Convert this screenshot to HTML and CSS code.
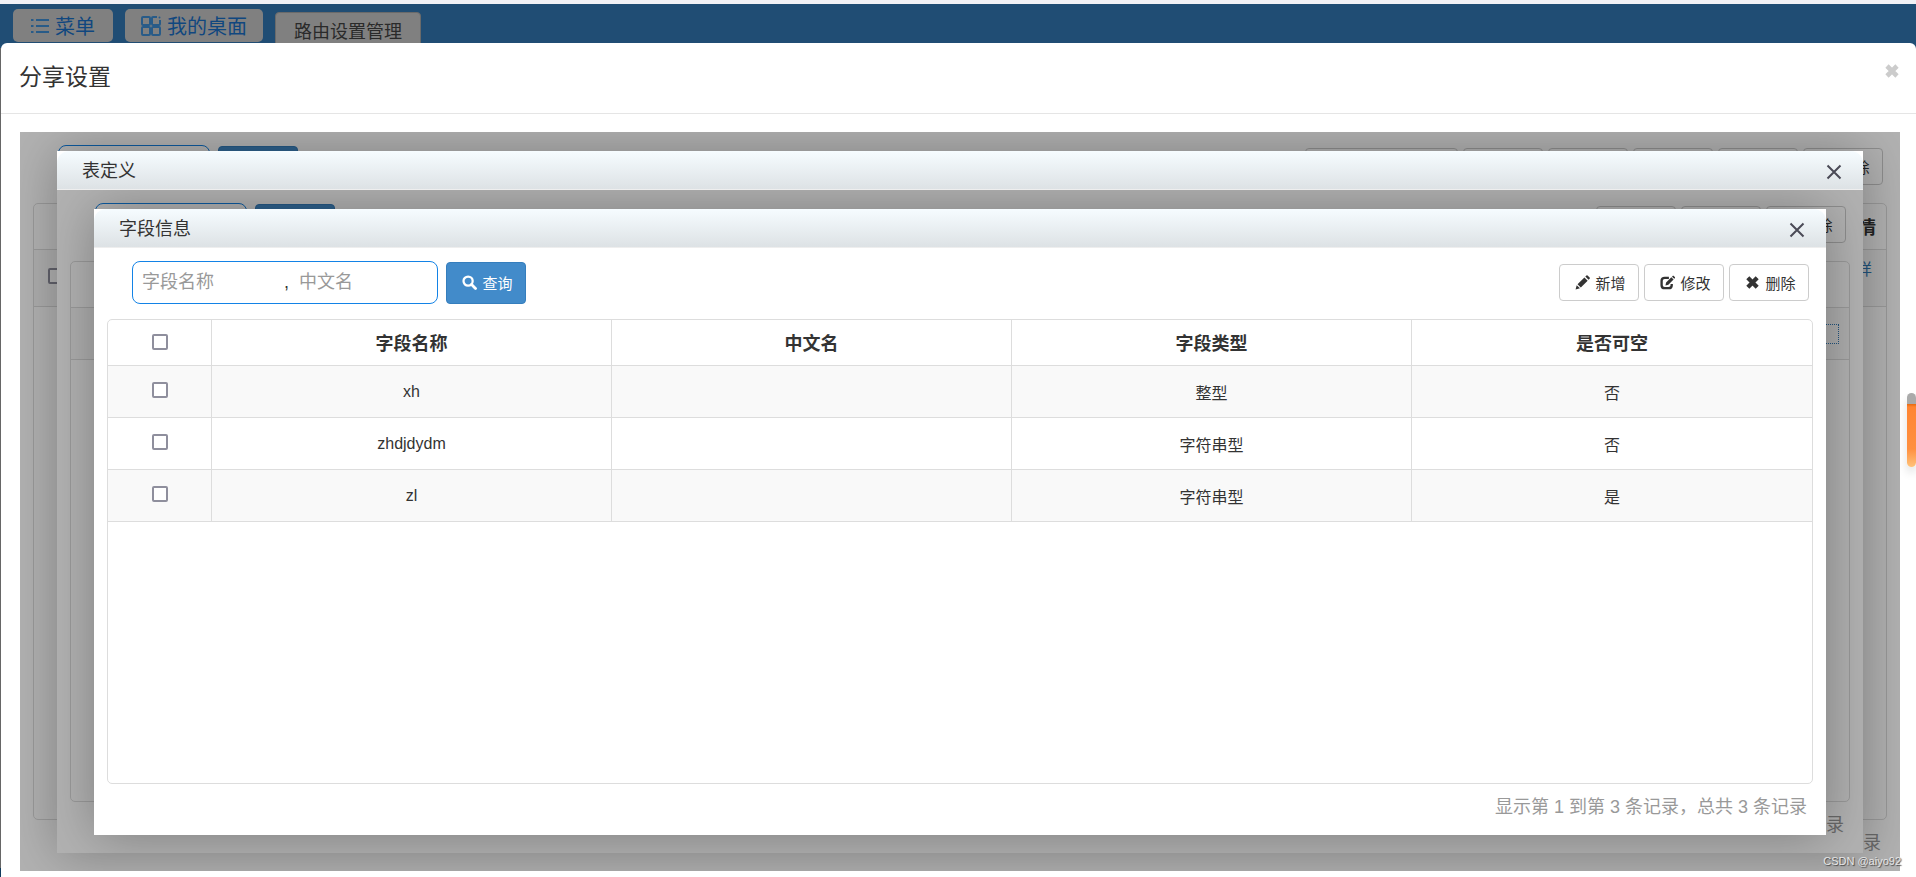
FILE: index.html
```html
<!DOCTYPE html>
<html lang="zh-CN">
<head>
<meta charset="utf-8">
<title>分享设置</title>
<link rel="stylesheet" href="styles.css">
</head>
<body>
<svg class="sprite" aria-hidden="true">
  <symbol id="i-search" viewBox="0 0 16 16"><circle cx="6.5" cy="6.5" r="4.9" fill="none" stroke="currentColor" stroke-width="2.4"/><path d="M10.2 10.2l4.2 4.2" stroke="currentColor" stroke-width="3" stroke-linecap="round"/></symbol>
  <symbol id="i-pencil" viewBox="0 0 16 16"><path fill="currentColor" d="M.6 15.4l1.2-4.6 3.5 3.4zM2.7 9.900l7.300-7.300 3.500 3.500-7.300 7.300zM11 1.700L12.200.500q.6-.6 1.200 0l2.200 2.200q.6.6 0 1.200L14.400 5.100z"/></symbol>
  <symbol id="i-edit" viewBox="0 0 16 16"><path fill="none" stroke="currentColor" stroke-width="2.500" d="M9.500 3H5Q1.700 3 1.700 6.200v4.600Q1.700 14 5 14h4.200q3.300 0 3.300-3.200V9.500"/><path fill="currentColor" d="M5.800 11.200l.7-3.100 5.600-5.600 2.400 2.400-5.600 5.600zM12.800 1.800l.9-.9q.4-.4.8 0l1.500 1.500q.4.4 0 .8l-.8.9z"/></symbol>
  <symbol id="i-remove" viewBox="0 0 16 16"><path fill="none" stroke="currentColor" stroke-width="4.600" d="M3 3l10 10M13 3L3 13"/></symbol>
  <symbol id="i-close" viewBox="0 0 16 16"><path fill="none" stroke="currentColor" stroke-width="2" d="M1.500 1.500l13 13M14.500 1.500l-13 13"/></symbol>
  <symbol id="i-list" viewBox="0 0 18 16"><path fill="none" stroke="currentColor" stroke-width="2" d="M0 2h2.500M5 2h13M0 8h2.500M5 8h13M0 14h2.500M5 14h13"/></symbol>
  <symbol id="i-grid" viewBox="0 0 20 20"><g fill="none" stroke="currentColor" stroke-width="2"><rect x="1" y="1" width="8" height="8" rx="1"/><rect x="1" y="11" width="8" height="8" rx="1"/><rect x="11" y="11" width="8" height="8" rx="1"/><path d="M16 1h-4q-1 0-1 1v6q0 1 1 1h6q1 0 1-1V4"/></g><circle cx="18.500" cy="1.500" r="1" fill="currentColor"/></symbol>
</svg>

<nav class="tabs">
  <a class="tab" href="#menu"><svg class="icon-list"><use href="#i-list"/></svg>菜单</a>
  <a class="tab tab-desk" href="#desk"><svg class="icon-grid"><use href="#i-grid"/></svg>我的桌面</a>
  <a class="tab tab-current" href="#route">路由设置管理</a>
</nav>

<main class="modal">
  <header class="modal-head">
    <h1>分享设置</h1>
    <button class="modal-close" aria-label="关闭"><svg><use href="#i-remove"/></svg></button>
  </header>

  <section class="view view-root">
    <div class="toolbar">
      <div class="search search-short"></div>
      <button class="btn btn-primary" aria-label="查询"></button>
      <div class="actions">
        <button class="btn btn-wide" aria-label="设置"></button>
        <button class="btn" aria-label="同步"></button>
        <button class="btn" aria-label="查看"></button>
        <button class="btn" aria-label="新增"></button>
        <button class="btn" aria-label="修改"></button>
        <button class="btn"><svg><use href="#i-remove"/></svg>删除</button>
      </div>
    </div>
    <div class="panel">
      <table class="grid grid-back">
        <thead><tr><th class="pick"></th><th class="more">详情</th></tr></thead>
        <tbody><tr class="row-tall"><td class="pick"><input type="checkbox" aria-label="选择"></td><td class="more"><a href="#detail">详</a></td></tr></tbody>
      </table>
    </div>
    <p class="summary">条记录</p>

    <div class="shade"></div>
    <section class="dialog" role="dialog" aria-labelledby="t-table">
      <header class="dialog-head">
        <h2 id="t-table">表定义</h2>
        <button class="dialog-close" aria-label="关闭"><svg><use href="#i-close"/></svg></button>
      </header>
      <div class="view">
        <div class="toolbar">
          <div class="search search-short"></div>
          <button class="btn btn-primary" aria-label="查询"></button>
          <div class="actions">
            <button class="btn" aria-label="新增"></button>
            <button class="btn" aria-label="修改"></button>
            <button class="btn"><svg><use href="#i-remove"/></svg>删除</button>
          </div>
        </div>
        <div class="panel">
          <table class="grid grid-back">
            <thead><tr><th class="pick"></th><th></th></tr></thead>
            <tbody><tr><td class="pick"></td><td class="more"><a class="focused" href="#fields" aria-label="字段信息"></a></td></tr></tbody>
          </table>
        </div>
        <p class="summary">条记录</p>

        <div class="shade"></div>
        <section class="dialog" role="dialog" aria-labelledby="t-field">
          <header class="dialog-head">
            <h2 id="t-field">字段信息</h2>
            <button class="dialog-close" aria-label="关闭"><svg><use href="#i-close"/></svg></button>
          </header>
          <div class="view">
            <div class="toolbar">
              <div class="search">
                <input class="field-name" type="text" placeholder="字段名称" aria-label="字段名称">
                <span>,</span>
                <input type="text" placeholder="中文名" aria-label="中文名">
              </div>
              <button class="btn btn-primary"><svg><use href="#i-search"/></svg>查询</button>
              <div class="actions">
                <button class="btn"><svg><use href="#i-pencil"/></svg>新增</button>
                <button class="btn"><svg><use href="#i-edit"/></svg>修改</button>
                <button class="btn"><svg><use href="#i-remove"/></svg>删除</button>
              </div>
            </div>
            <div class="panel">
              <table class="grid">
                <thead>
                  <tr><th class="pick"><input type="checkbox" aria-label="全选"></th><th>字段名称</th><th>中文名</th><th>字段类型</th><th>是否可空</th></tr>
                </thead>
                <tbody>
                  <tr><td class="pick"><input type="checkbox" aria-label="选择 xh"></td><td>xh</td><td></td><td>整型</td><td>否</td></tr>
                  <tr><td class="pick"><input type="checkbox" aria-label="选择 zhdjdydm"></td><td>zhdjdydm</td><td></td><td>字符串型</td><td>否</td></tr>
                  <tr><td class="pick"><input type="checkbox" aria-label="选择 zl"></td><td>zl</td><td></td><td>字符串型</td><td>是</td></tr>
                </tbody>
              </table>
            </div>
            <p class="summary">显示第 1 到第 3 条记录，总共 3 条记录</p>
          </div>
        </section>
      </div>
    </section>
  </section>
  <div class="side-handle"></div>
  <div class="watermark">CSDN @aiyo92</div>
</main>
</body>
</html>
```
FILE: styles.css
```css
* { box-sizing: border-box; }

body {
  margin: 0;
  min-height: 100vh;
  display: flex;
  flex-direction: column;
  overflow: hidden;
  background: linear-gradient(to top, #103a5c 9px, #666 9px);
  color: #333;
  font-family: "Liberation Sans", "Noto Sans CJK SC", sans-serif;
  font-size: 16px;
}

h1, h2, p { margin: 0; font-weight: 400; }
button, input { font: inherit; color: inherit; }
button { cursor: pointer; }
a { color: #337ab7; text-decoration: none; }
.sprite { display: none; }

/* Tab bar */
.tabs {
  display: flex;
  gap: 12px;
  height: 48px;
  padding: 5px 13px 0;
  border-top: 4px solid #f1f1f6;
  background: #204d74;
}
.tab {
  display: flex;
  align-items: center;
  gap: 6px;
  height: 33px;
  padding: 0 18px;
  border-radius: 5px;
  background: #808080;
  color: #10477f;
  font-size: 20px;
}
.tab svg { color: #285b88; }
.tab-desk { padding: 0 16px; }
.icon-list { width: 18px; height: 16px; }
.icon-grid { width: 20px; height: 20px; }
.tab-current {
  height: 36px;
  margin-top: 3px;
  padding: 0 18px;
  border: 1px solid #6a6a6a;
  border-radius: 4px 4px 0 0;
  color: #2a2a2a;
  font-size: 18px;
}

/* Outer modal */
.modal {
  position: relative;
  flex: 1;
  display: flex;
  flex-direction: column;
  margin: -5px 0 0 1px;
  border-radius: 6px 6px 0 0;
  background: #fff;
}
.modal-head {
  display: flex;
  justify-content: space-between;
  align-items: flex-start;
  height: 71px;
  padding: 18px 16px 0 18px;
  border-bottom: 1px solid #e5e5e5;
}
.modal-head h1 { font-size: 23px; line-height: 33px; }
.modal-close {
  width: 16px;
  height: 16px;
  margin-top: 2px;
  padding: 0;
  border: 0;
  background: none;
  color: #ccc;
}
.modal-close svg { display: block; width: 16px; height: 16px; }

/* View: toolbar, table panel and summary line */
.view {
  position: relative;
  flex: 1;
  display: flex;
  flex-direction: column;
  overflow: hidden;
  background: #fff;
}
.view-root { margin: 18px 16px 6px 19px; }
.toolbar {
  display: flex;
  align-items: center;
  gap: 8px;
  height: 71px;
  padding: 13px 17px 15px 38px;
}
.search {
  display: flex;
  align-items: center;
  width: 306px;
  height: 43px;
  padding: 0 9px;
  border: 1px solid #1383e6;
  border-radius: 8px;
  font-size: 18px;
}
.search-short { width: 152px; }
.search input {
  flex: 1;
  min-width: 0;
  padding: 0;
  border: 0;
  outline: 0;
  background: none;
}
.search .field-name { flex: 0 0 142px; }
.search span { width: 15px; }
.search input::placeholder { color: #999; opacity: 1; }
.btn {
  display: flex;
  align-items: center;
  justify-content: center;
  gap: 5px;
  width: 80px;
  height: 37px;
  padding: 0 0 0 3px;
  border: 1px solid #ccc;
  border-radius: 4px;
  background: #fff;
  font-size: 15px;
}
.btn svg { width: 15px; height: 15px; }
.btn-wide { width: 153px; }
.btn-primary {
  height: 42px;
  border-color: #357ebd;
  background: #428bca;
  color: #fff;
}
.actions { display: flex; gap: 5px; margin-left: auto; }

.panel {
  flex: 1;
  margin: 0 13px;
  border: 1px solid #ddd;
  border-radius: 5px;
  overflow: hidden;
}
.grid {
  width: 100%;
  table-layout: fixed;
  border-collapse: separate;
  border-spacing: 0;
}
.grid th, .grid td {
  padding: 0;
  border-bottom: 1px solid #ddd;
  border-right: 1px solid #ddd;
  text-align: center;
}
.grid th { height: 46px; padding-bottom: 2px; font-size: 18px; font-weight: 700; }
.grid td { height: 52px; }
.grid th:last-child, .grid td:last-child { border-right: 0; }
.grid tbody tr:nth-child(odd) { background: #f9f9f9; }
.grid .pick { width: 104px; }
.grid .more { padding-right: 10px; text-align: right; }
.grid .row-tall td { height: 57px; padding-bottom: 20px; }
.grid .row-tall .more { padding-right: 14px; }
.grid-back .pick { width: 44px; border-right: 0; }
.focused {
  display: inline-block;
  width: 40px;
  height: 20px;
  border: 1px dotted #337ab7;
  vertical-align: middle;
}
.grid input {
  appearance: none;
  display: block;
  width: 16px;
  height: 16px;
  margin: 0 auto;
  border: 2px solid #8f8f9d;
  border-radius: 2px;
  background: #fff;
}
.grid td input { margin-bottom: 4px; }
.grid .row-tall input { margin: 16px auto 0; }

.summary {
  height: 51px;
  padding: 10px 19px 0;
  color: #999;
  font-size: 18px;
  line-height: 27px;
  text-align: right;
}

/* Stacked dialogs */
.shade { position: absolute; inset: 0; background: rgba(0, 0, 0, 0.3); }
.dialog {
  position: absolute;
  inset: 19px 37px 18px;
  display: flex;
  flex-direction: column;
  background: #fff;
  box-shadow: 1px 1px 50px rgba(0, 0, 0, 0.3);
}
.dialog-head {
  display: flex;
  align-items: center;
  justify-content: space-between;
  height: 39px;
  padding: 0 21px 0 25px;
  border-bottom: 1px solid #eee;
  border-radius: 12px 12px 0 0;
  background: linear-gradient(#f6fcff, #dde2e5);
}
.dialog-head h2 { padding-bottom: 2px; font-size: 18px; }
.dialog-close {
  width: 16px;
  height: 16px;
  margin-top: 3px;
  padding: 0;
  border: 0;
  background: none;
  color: #4a4a56;
}
.dialog-close svg { display: block; width: 16px; height: 16px; }

/* Overlays at the window edge */
.side-handle {
  position: absolute;
  right: 0;
  top: 350px;
  width: 9px;
  height: 74px;
  border-radius: 5px;
  background: linear-gradient(#aaa 11px, #e8690f 11px, #ff8533 14px, #ff9040 56px, #ffc27a);
  box-shadow: 0 6px 10px rgba(0, 0, 0, 0.12);
}
.watermark {
  position: absolute;
  right: 15px;
  bottom: 8px;
  color: #e6e6e6;
  font-size: 11px;
  line-height: 16px;
  text-shadow: 1px 1px 1px #444;
}
```
